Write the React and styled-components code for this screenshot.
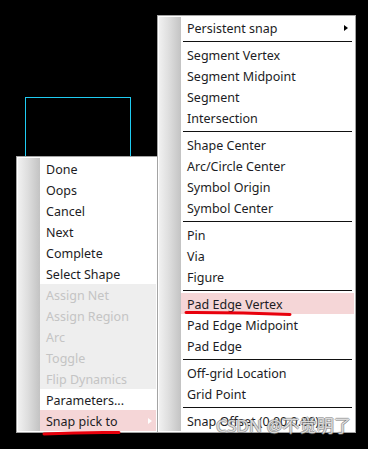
import React from "react";
import styled, { createGlobalStyle } from "styled-components";

const Global = createGlobalStyle`
  html, body { margin: 0; padding: 0; background: #000; }
  body { font-family: "Noto Sans", "Liberation Sans", sans-serif; }
`;

const Canvas = styled.div`
  position: relative;
  width: 368px;
  height: 449px;
  background: #000;
  overflow: hidden;
`;

const Shape = styled.div`
  position: absolute;
  left: 25px;
  top: 97px;
  width: 106px;
  height: 120px;
  border: 1px solid #1fcbf2;
  box-sizing: border-box;
`;

const Menu = styled.div`
  position: absolute;
  left: ${(p) => p.$left}px;
  top: ${(p) => p.$top}px;
  width: ${(p) => p.$width}px;
  z-index: ${(p) => p.$z};
  box-sizing: border-box;
  border: 1px solid #a4a4a4;
  padding: 1px;
  background: #fff;
  display: flex;
`;

const Gutter = styled.div`
  width: 22px;
  flex: none;
  background: linear-gradient(to right, #f1f1f1 0%, #dedede 45%, #c3c3c3 100%);
`;

const List = styled.div`
  flex: 1;
  display: flex;
  flex-direction: column;
  min-width: 0;
`;

const Item = styled.div`
  position: relative;
  box-sizing: border-box;
  height: 21px;
  line-height: 23px;
  padding-left: 6px;
  font-size: 12.5px;
  white-space: nowrap;
  color: ${(p) => (p.$disabled ? "#c4c4c4" : "#1c1c24")};
  background: ${(p) =>
    p.$hl ? "#f5d6d7" : p.$disabled ? "#eeeeee" : "transparent"};
`;

const Arrow = styled.span`
  position: absolute;
  right: ${(p) => (p.$light ? 4 : 6)}px;
  top: 50%;
  transform: translateY(-50%);
  width: 0;
  height: 0;
  border-top: ${(p) => (p.$light ? 3 : 3.5)}px solid transparent;
  border-bottom: ${(p) => (p.$light ? 3 : 3.5)}px solid transparent;
  border-left: 4px solid ${(p) => (p.$light ? "#ffffff" : "#000000")};
`;

const Separator = styled.div`
  height: 6px;
  display: flex;
  align-items: center;
  padding: 0 2px;
  &::after {
    content: "";
    flex: 1;
    height: 1px;
    background: #111;
  }
`;

const Marks = styled.svg`
  position: absolute;
  left: 0;
  top: 0;
  width: 368px;
  height: 449px;
  z-index: 5;
  pointer-events: none;
`;

const Watermark = styled.div`
  position: absolute;
  left: 216px;
  top: 412px;
  z-index: 6;
  font-family: "Noto Sans", "Noto Sans CJK SC", sans-serif;
  font-size: 17px;
  letter-spacing: 0.2px;
  white-space: nowrap;
  color: rgba(255, 255, 255, 0.72);
  text-shadow: 1px 0 0 rgba(110, 110, 110, 0.55), -1px 0 0 rgba(110, 110, 110, 0.55),
    0 1px 0 rgba(110, 110, 110, 0.55), 0 -1px 0 rgba(110, 110, 110, 0.55);
`;

const leftItems = [
  { t: "Done" },
  { t: "Oops" },
  { t: "Cancel" },
  { t: "Next" },
  { t: "Complete" },
  { t: "Select Shape" },
  { t: "Assign Net", d: true },
  { t: "Assign Region", d: true },
  { t: "Arc", d: true },
  { t: "Toggle", d: true },
  { t: "Flip Dynamics", d: true },
  { t: "Parameters..." },
  { t: "Snap pick to", hl: true, arrow: true },
];

const rightItems = [
  { t: "Persistent snap", arrow: true },
  "sep",
  { t: "Segment Vertex" },
  { t: "Segment Midpoint" },
  { t: "Segment" },
  { t: "Intersection" },
  "sep",
  { t: "Shape Center" },
  { t: "Arc/Circle Center" },
  { t: "Symbol Origin" },
  { t: "Symbol Center" },
  "sep",
  { t: "Pin" },
  { t: "Via" },
  { t: "Figure" },
  "sep",
  { t: "Pad Edge Vertex", hl: true },
  { t: "Pad Edge Midpoint" },
  { t: "Pad Edge" },
  "sep",
  { t: "Off-grid Location" },
  { t: "Grid Point" },
  "sep",
  { t: "Snap Offset (0.00 0.00)..." },
];

function MenuItems({ items, lightArrow }) {
  return items.map((it, i) =>
    it === "sep" ? (
      <Separator key={i} />
    ) : (
      <Item key={i} $disabled={it.d} $hl={it.hl}>
        {it.t}
        {it.arrow && <Arrow $light={lightArrow} />}
      </Item>
    )
  );
}

export default function App() {
  return (
    <>
      <Global />
      <Canvas>
        <Shape />
        <Menu $left={157} $top={15} $width={199} $z={1}>
          <Gutter />
          <List>
            <MenuItems items={rightItems} />
          </List>
        </Menu>
        <Menu $left={16} $top={156} $width={142} $z={2}>
          <Gutter />
          <List>
            <MenuItems items={leftItems} lightArrow />
          </List>
        </Menu>
        <Marks viewBox="0 0 368 449">
          <path
            d="M44 434 Q 80 432, 119 432.5"
            stroke="#e8000c"
            strokeWidth="3"
            fill="none"
            strokeLinecap="round"
          />
          <path
            d="M186 312.5 Q 240 312.3, 290 314.5"
            stroke="#e8000c"
            strokeWidth="3"
            fill="none"
            strokeLinecap="round"
          />
        </Marks>
        <Watermark>CSDN @不觉明了</Watermark>
      </Canvas>
    </>
  );
}
